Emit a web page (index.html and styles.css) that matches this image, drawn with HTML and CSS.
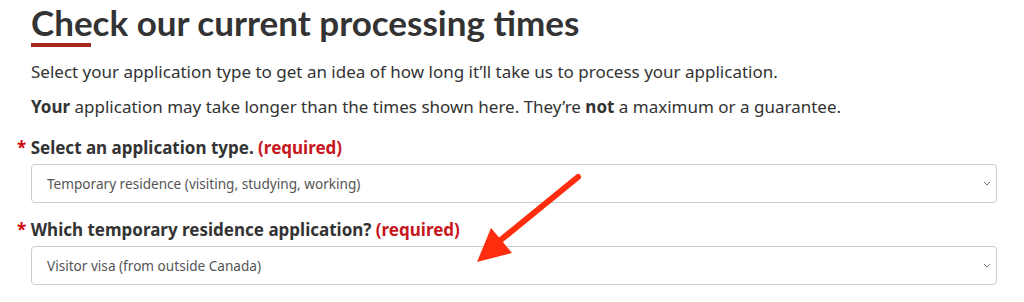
FILE: index.html
```html
<!DOCTYPE html>
<html lang="en">
<head>
    <meta charset="UTF-8">
    <title>Check our current processing times</title>
    <link rel="stylesheet" href="styles.css">
</head>
<body>
    <div class="page">
        <h1>Check our current processing times</h1>
        <p class="intro">Select your application type to get an idea of how long it’ll take us to process your application.</p>
        <p class="intro"><strong>Your</strong> application may take longer than the times shown here. They’re <strong>not</strong> a maximum or a guarantee.</p>

        <div class="field">
            <label class="field-label" for="appType"><span class="star">*</span> Select an application type. <span class="req">(required)</span></label>
            <div class="select-wrap">
                <select id="appType" class="select">
                    <option>Temporary residence (visiting, studying, working)</option>
                </select>
                <svg class="chevron" width="8" height="5" viewBox="0 0 8 5"><path d="M1 1 L4 4 L7 1" fill="none" stroke="#777" stroke-width="1"/></svg>
            </div>
        </div>

        <div class="field field-next">
            <label class="field-label" for="trType"><span class="star">*</span> Which temporary residence application? <span class="req">(required)</span></label>
            <div class="select-wrap">
                <select id="trType" class="select">
                    <option>Visitor visa (from outside Canada)</option>
                </select>
                <svg class="chevron" width="8" height="5" viewBox="0 0 8 5"><path d="M1 1 L4 4 L7 1" fill="none" stroke="#777" stroke-width="1"/></svg>
            </div>
        </div>

        <!-- annotation arrow -->
        <svg class="pointer" width="1024" height="302" viewBox="0 0 1024 302">
            <line x1="578" y1="177" x2="497" y2="243" stroke="#ff2d0d" stroke-width="6" stroke-linecap="round"/>
            <polygon points="477,262 491,228 512,253" fill="#ff2d0d"/>
        </svg>
    </div>
</body>
</html>
```

FILE: styles.css
```css
body {
    margin: 0;
    background: #fff;
    font-family: 'Noto Sans', sans-serif;
    color: #333;
}
.page {
    padding: 0 27px 0 31px;
}
h1 {
    font-family: 'Lato', sans-serif;
    font-weight: 700;
    font-size: 35px;
    line-height: 44px;
    margin: 0;
    padding-bottom: 16px;
    position: relative;
    color: #333;
}
h1::after {
    content: "";
    position: absolute;
    left: 0;
    top: 43px;
    width: 60px;
    height: 4px;
    background: #a62a1e;
}
.intro {
    font-size: 17px;
    line-height: 24px;
    margin: 0 0 11px;
}
.intro strong {
    font-weight: 700;
}
.field {
    margin-top: 17px;
}
.field-next {
    margin-top: 15px;
}
.field-label {
    display: block;
    font-weight: 700;
    font-size: 17px;
    line-height: 24px;
    margin-left: -14px;
    margin-bottom: 4px;
}
.star {
    color: #d3080c;
}
.req {
    color: #c8161d;
}
.select-wrap {
    position: relative;
}
.select {
    appearance: none;
    -webkit-appearance: none;
    display: block;
    width: 100%;
    height: 39px;
    border: 1px solid #ccc;
    border-radius: 4px;
    background: #fff;
    padding: 0 15px;
    font-family: 'Noto Sans', sans-serif;
    font-size: 13.6px;
    color: #555;
}
.chevron {
    position: absolute;
    right: 6px;
    top: 17px;
}
.pointer {
    position: absolute;
    left: 0;
    top: 0;
    pointer-events: none;
}
```
